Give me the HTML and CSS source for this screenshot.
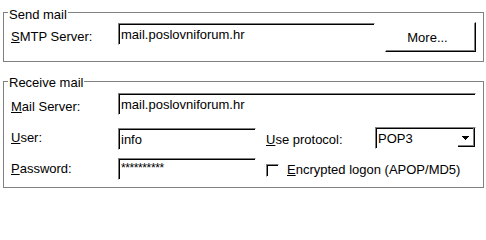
FILE: index.html
```html
<!DOCTYPE html>
<html lang="en">
<head>
<meta charset="utf-8">
<title>Mail settings</title>
<link rel="stylesheet" href="styles.css">
</head>
<body>
<div class="dialog">
  <section class="group group-send">
    <div class="group-title">Send mail</div>
    <div class="row row-smtp">
      <label class="lbl lbl-smtp"><u>S</u>MTP Server:</label>
      <div class="edit edit-smtp">mail.poslovniforum.hr</div>
      <button class="btn" type="button">More...</button>
    </div>
  </section>
  <section class="group group-recv">
    <div class="group-title">Receive mail</div>
    <div class="row row-mail">
      <label class="lbl lbl-mail"><u>M</u>ail Server:</label>
      <div class="edit edit-wide">mail.poslovniforum.hr</div>
    </div>
    <div class="row row-user">
      <label class="lbl lbl-user"><u>U</u>ser:</label>
      <div class="edit edit-short">info</div>
      <label class="lbl-proto"><u>U</u>se protocol:</label>
      <div class="combo">
        <span class="combo-text">POP3</span>
        <span class="combo-btn"><svg width="7" height="4" viewBox="0 0 7 4"><path d="M0 0h7v1h-1v1h-1v1h-1v1h-1v-1h-1v-1h-1v-1h-1z" fill="#000"/></svg></span>
      </div>
    </div>
    <div class="row row-pass">
      <label class="lbl lbl-pass"><u>P</u>assword:</label>
      <div class="edit edit-short edit-pass">**********</div>
      <span class="check"></span>
      <label class="check-label"><u>E</u>ncrypted logon (APOP/MD5)</label>
    </div>
  </section>
</div>
</body>
</html>
```

FILE: styles.css
```css
* { box-sizing: border-box; }

body {
  margin: 0;
  background: #fff;
  color: #000;
  font: 13px/15px "Liberation Sans", Arial, sans-serif;
}

.dialog {
  width: 486px;
  padding: 12px 2px 0 3px;
}

.group {
  border: 1px solid #808080;
}

.group-recv {
  margin-top: 19px;
}

.group-title {
  width: fit-content;
  margin: -6px 0 0 4px;
  padding: 0 1px;
  background: #fff;
  line-height: 15px;
}

.group-recv .group-title {
  margin-top: -7px;
}

.row {
  display: flex;
  align-items: flex-start;
  padding-left: 7px;
}

.lbl {
  width: 107px;
  flex: none;
}

.edit {
  flex: none;
  height: 22px;
  border: 1px solid;
  border-color: #808080 #fff #fff #808080;
  box-shadow: inset 1px 1px 0 #000;
  padding: 3px 0 0 2px;
  line-height: 15px;
  white-space: nowrap;
  overflow: hidden;
}

/* Send mail */
.row-smtp {
  padding-bottom: 9px;
}
.lbl-smtp { margin-top: 7px; }
.edit-smtp {
  width: 257px;
  margin-top: 1px;
}

.btn {
  flex: none;
  width: 91px;
  height: 30px;
  margin-left: 10px;
  padding: 0 6px 0 0;
  border: 1px solid;
  border-color: #fff #000 #000 #fff;
  box-shadow: inset -1px -1px 0 #808080;
  background: #fff;
  color: #000;
  font: inherit;
  line-height: 15px;
  text-align: center;
}

/* Receive mail */
.row-mail { margin-top: 3px; }
.lbl-mail { margin-top: 6px; }
.edit-wide { width: 358px; }

.row-user { margin-top: 12px; }
.lbl-user { margin-top: 3px; }
.edit-short {
  width: 138px;
  margin-top: 1px;
}

.lbl-proto {
  flex: none;
  width: 109px;
  margin: 5px 0 0 10px;
}

.combo {
  flex: none;
  display: flex;
  width: 101px;
  height: 22px;
  border: 1px solid;
  border-color: #808080 #fff #fff #808080;
  box-shadow: inset 1px 1px 0 #000;
  padding: 1px 0 0 1px;
}

.combo-text {
  flex: 1;
  padding: 2px 0 0 1px;
  line-height: 15px;
}

.combo-btn {
  flex: none;
  display: flex;
  align-items: center;
  justify-content: center;
  width: 17px;
  height: 19px;
  margin-top: -1px;
  border-right: 1px solid #000;
  border-bottom: 1px solid #000;
  box-shadow: inset -1px -1px 0 #808080;
  padding: 1px 1px 0 0;
}

.combo-btn svg { display: block; }

.row-pass {
  margin-top: 8px;
  padding-bottom: 7px;
}
.lbl-pass { margin-top: 3px; }
.edit-pass {
  margin-top: 0;
  padding-top: 2px;
  font-size: 12px;
  letter-spacing: -0.4px;
}

.check {
  flex: none;
  width: 13px;
  height: 13px;
  margin: 6px 0 0 10px;
  border: 1px solid;
  border-color: #808080 #fff #fff #808080;
  box-shadow: inset 1px 1px 0 #000;
}

.check-label {
  margin: 4px 0 0 8px;
  white-space: nowrap;
}
```
